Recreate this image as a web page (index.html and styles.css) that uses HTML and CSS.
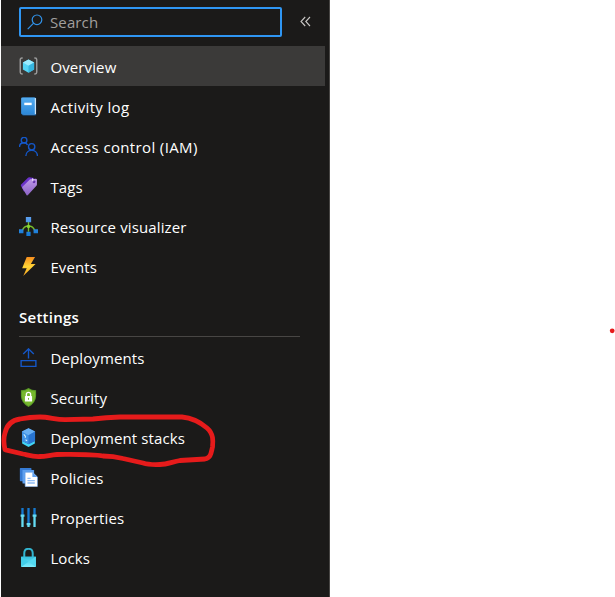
FILE: index.html
```html
<!DOCTYPE html>
<html lang="en">
<head>
<meta charset="utf-8">
<title>Resource menu</title>
<link rel="stylesheet" href="styles.css">
</head>
<body>
<svg class="defs" aria-hidden="true">
  <defs>
    <linearGradient id="blue" x1="0" y1="0" x2="0" y2="1"><stop offset="0" stop-color="#5ea0ef"/><stop offset="1" stop-color="#0f78d4"/></linearGradient>
    <linearGradient id="book" x1="0" y1="0" x2="0" y2="1"><stop offset="0" stop-color="#55acef"/><stop offset="1" stop-color="#2b87d8"/></linearGradient>
    <linearGradient id="purple" x1="0" y1="0" x2="0" y2="1"><stop offset="0" stop-color="#c09aea"/><stop offset="1" stop-color="#8b62c4"/></linearGradient>
    <linearGradient id="gold" x1="0" y1="0" x2="0" y2="1"><stop offset="0" stop-color="#f78d1e"/><stop offset=".5" stop-color="#ffd436"/><stop offset="1" stop-color="#f9a31f"/></linearGradient>
    <linearGradient id="cyan" x1="0" y1="0" x2="0" y2="1"><stop offset="0" stop-color="#32bedd"/><stop offset="1" stop-color="#7deeff"/></linearGradient>
  </defs>
</svg>
<aside class="panel">
  <div class="toolbar">
    <div class="search">
      <svg class="glass" viewBox="0 0 16 16"><circle cx="10" cy="5.8" r="4.8"/><path d="M6.6 9.2.7 15.2"/></svg>
      <span>Search</span>
    </div>
    <svg class="collapse" viewBox="0 0 12 12"><path d="M5.2 1 1 5.500 5.200 10M10 1 5.800 5.500 10 10"/></svg>
  </div>
  <nav>
    <a class="item selected">
      <svg class="icon" viewBox="0 0 18 18"><path d="M3.500 1H2.800Q1.200 1 1.200 2.500V14.500Q1.200 16 2.800 16H3.500M14.500 1h.7Q16.800 1 16.800 2.500V14.500Q16.800 16 15.200 16h-.7" fill="none" stroke="#999" stroke-width="1.400"/><path d="m9 2.300 5.300 2.900v6.600l-5.300 3.100-5.300-3.100V5.200z" fill="#55d5f5"/><path d="m9 2.300 5.300 2.900-5.300 3-5.300-3z" fill="#9aebff"/><path d="m14.300 5.200-5.300 3v6.700l5.300-3.100z" fill="#35b5e0"/></svg>
      <span>Overview</span>
    </a>
    <a class="item">
      <svg class="icon" viewBox="0 0 18 18"><rect x="3" y=".5" width="13.300" height="17" rx="1" fill="#155b9f"/><rect x="4" y="1" width="12" height="15.300" rx=".5" fill="#e8f5ff"/><path d="M2 1.500Q2 .5 3 .5h12v16H3q-1 0-1-1z" fill="url(#book)"/><rect x="5" y="5.400" width="7" height="2.300" fill="#fff"/></svg>
      <span class="loose">Activity log</span>
    </a>
    <a class="item">
      <svg class="icon line" viewBox="0 0 18 18"><circle cx="4.800" cy="3" r="2.700"/><path d="M.5 9.500C.5 4.700 7 4.200 8 7.700"/><circle cx="12" cy="9.300" r="3"/><path d="M6.500 18c.2-7.300 10.800-7.300 11 0"/></svg>
      <span class="loose">Access control (IAM)</span>
    </a>
    <a class="item">
      <svg class="icon" viewBox="0 0 18 18"><path d="M2 7.200 8.500.7q.5-.5 1.300-.4l4.500.6-9.500 13-3-5.700q-.3-.6.200-1z" fill="#6932c7"/><path d="m3.500 9 7-6.900 5.400-.5q1.100 0 1.100 1.100v4.500q0 .7-.5 1.200l-8 8.700q-.8.800-1.400-.1L3 10.200q-.3-.7.500-1.200z" fill="url(#purple)"/><circle cx="14.200" cy="4.600" r="1.400" fill="#6534ad"/><path d="M12.400 1.500q1.200.4.600 2.700" stroke="#f3eaff" stroke-width="1" fill="none"/></svg>
      <span>Tags</span>
    </a>
    <a class="item">
      <svg class="icon" viewBox="0 0 18 18"><path d="M9 4v10M3 13q1.500-4.500 6-4.500t6 4.500" fill="none" stroke="#76bc2d" stroke-width="1.300"/><circle cx="9" cy="9" r="1.600" fill="#86d633"/><path d="M6.500 0h5v5h-5zM0 11.500h4.200v4H0zM13.800 11.500H18v4h-4.200zM7 14h4v4H7z" fill="url(#blue)"/></svg>
      <span>Resource visualizer</span>
    </a>
    <a class="item">
      <svg class="icon" viewBox="0 0 18 18"><path d="M7.300 0h7.900l-4 6.700h4.500L4 18l3.300-7.300H3z" fill="url(#gold)"/></svg>
      <span>Events</span>
    </a>
  </nav>
  <h2 class="heading">Settings</h2>
  <nav>
    <a class="item">
      <svg class="icon line" viewBox="0 0 18 18"><path d="M2 11.900h14v5.500H2zM9 10V.9M4 5.700 9 .8l5 4.900"/></svg>
      <span>Deployments</span>
    </a>
    <a class="item">
      <svg class="icon" viewBox="0 0 18 18"><path d="M9 0q3 2.200 7.200 2.200v5.600Q16 14 9 18 2 14 1.800 7.800V2.200Q6 2.200 9 0z" fill="#5b9a27"/><path d="M9 1.200q3 1.900 6.200 2v4.600Q15 13.300 9 16.800 3 13.300 2.800 7.800V3.200Q6 3.100 9 1.200z" fill="#76b82d"/><path d="M7 8V6q0-1.900 2-1.900T11 6v2" stroke="#fff" stroke-width="1.300" fill="none"/><rect x="5.600" y="7.600" width="6.800" height="5.200" rx=".6" fill="#fff"/><path d="M9 9.400v1.700" stroke="#76b82d"/></svg>
      <span>Security</span>
    </a>
    <a class="item">
      <svg class="icon" viewBox="0 0 18 18"><path d="m3 12 6 3.200 6-3.200v2.600L9 18l-6-3.400z" fill="#42d5f5"/><path d="m9 .2 6.200 3.200v8.800L9 15.500l-6.200-3.300V3.400z" fill="#3f92e6"/><path d="m9 .2 6.200 3.200L9 6.800 2.800 3.400z" fill="#68b0f4"/><path d="M9 6.800v8.700l6.200-3.300V3.400z" fill="#2874d1"/><path d="m4.500 6 1.500 1.700V9.300M6.200 11.200l1.500.8" stroke="#d9f3ff" stroke-width="1" fill="none"/></svg>
      <span>Deployment stacks</span>
    </a>
    <a class="item">
      <svg class="icon" viewBox="0 0 18 18"><rect x=".8" y="0" width="11" height="12.500" rx=".6" fill="#367bd4"/><rect x="3.300" y="1.800" width="11" height="13" rx=".6" fill="#5ea0ef"/><path d="M6.500 4h6.300l4.700 4.500V17q0 .8-.8.800H6.500q-.7 0-.7-.8V4.800q0-.8.7-.8z" fill="#fff" stroke="#669ee6" stroke-width=".6"/><path d="M12.700 4v4.600h4.600z" fill="#5ea0ef"/><path d="M8 9.800h3M8 12h7M8 14.200h7" stroke="#8fbcf5" stroke-width="1.300"/></svg>
      <span>Policies</span>
    </a>
    <a class="item">
      <svg class="icon" viewBox="0 0 18 18"><path d="M2.200 0h2.200v7H2.200zM7.900 0h2.200v15H7.900zM13.600 0h2.200v7h-2.200z" fill="#1579d0"/><path d="M1.500 6.200h3.700v2.200h-.8V18H2.200V8.400h-.7zM12.900 6.200h3.700v2.200h-.8V18h-2.200V8.400h-.7zM7.200 14.200h3.700v2.200h-.8V18H7.900v-1.600h-.7z" fill="#65dcf3"/></svg>
      <span>Properties</span>
    </a>
    <a class="item">
      <svg class="icon" viewBox="0 0 18 18"><path d="M5 9V5q0-4.200 4-4.200T13 5v4" stroke="#32b5d0" stroke-width="1.900" fill="none"/><rect x="2" y="8" width="14" height="10" rx=".7" fill="url(#cyan)"/><path d="m2 8 7 5-7 5z" fill="#42cee9"/><path d="m16 8-7 5 7 5z" fill="#53d9f1"/></svg>
      <span>Locks</span>
    </a>
  </nav>
</aside>
<svg class="ink" viewBox="0 0 615 597"><path d="M5 449.500C4 445 3 439 5 433C7 424 13 420 20 419Q30 417 40 417C49 417 55 419.500 65 419.700L93 419Q106 417.300 120 417H182C193 418 200 422 207 428C214 434 213 442 212.500 447C211 453 211 458 205 459L180 460.500C172 462 167 464.500 160 464.500Q149 465 143 463L123 458.500Q113 456 103 456C91 454 74 454.500 57 454.500C50 455 46 456.500 40 456.500C33 457 28 455 23 454L5.500 449.800"/><circle cx="612.200" cy="330.800" r="2.400"/></svg>
</body>
</html>
```
FILE: styles.css
```css
* {
  box-sizing: border-box;
}

body {
  margin: 0;
  height: 597px;
  overflow: hidden;
  background: #fff;
  font-family: "Open Sans", "Noto Sans", sans-serif;
  font-size: 15px;
  letter-spacing: 0.12px;
  color: #fff;
}

.defs {
  display: block;
  width: 0;
  height: 0;
}

.panel {
  width: 329px;
  height: 597px;
  margin-left: 1px;
  background: #1b1a19;
  border-right: 1px solid #484644;
}

.toolbar {
  display: flex;
  align-items: flex-start;
  height: 46px;
  padding: 7px 0 0 18px;
}

.search {
  display: flex;
  align-items: center;
  width: 263px;
  height: 30px;
  padding-left: 6px;
  border: 2px solid #2f96f3;
  border-radius: 2px;
  color: #a19f9d;
}

.glass {
  width: 16px;
  height: 16px;
  margin-right: 7px;
  fill: none;
  stroke: #3192e8;
  stroke-width: 1.2;
}

.collapse {
  width: 12px;
  height: 12px;
  margin: 9px 0 0 18px;
  fill: none;
  stroke: #c8c6c4;
  stroke-width: 1.1;
}

.item {
  display: flex;
  align-items: center;
  width: 324px;
  height: 40px;
  padding-left: 18px;
  white-space: nowrap;
}

.item span {
  margin-top: 2px;
}

.item .loose {
  letter-spacing: 0.36px;
}

.selected {
  background: #3b3a39;
}

.icon {
  width: 19px;
  height: 19px;
  margin: 1px 12.4px 0 0;
}

.line {
  fill: none;
  stroke: #1457c8;
  stroke-width: 1.3;
}

.heading {
  width: 281px;
  height: 51px;
  margin: 0 0 0 18px;
  padding-top: 20px;
  border-bottom: 1px solid #484644;
  font-size: 15px;
  font-weight: 600;
  line-height: 22px;
  letter-spacing: 0.25px;
}

.ink {
  position: absolute;
  left: 0;
  top: 0;
  width: 615px;
  height: 597px;
  pointer-events: none;
}

.ink path {
  fill: none;
  stroke: #e61b1b;
  stroke-width: 4.8;
  stroke-linecap: round;
  stroke-linejoin: round;
}

.ink circle {
  fill: #e61b1b;
}
```
